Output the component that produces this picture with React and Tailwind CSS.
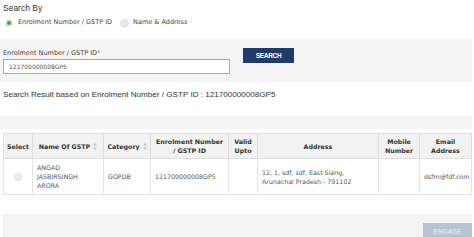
import React from "react";

const SortIcon = () => (
  <svg width="4" height="7" viewBox="0 0 4 7" className="inline-block ml-[3px] align-[-1px]">
    <path d="M2 0 L4 2.5 L0 2.5 Z" fill="#c4c4c4" />
    <path d="M2 7 L4 4.5 L0 4.5 Z" fill="#c4c4c4" />
  </svg>
);

export default function App() {
  const th =
    "border border-[#dedede] bg-[#f2f2f2] font-bold text-[#333] text-center align-middle px-[3px] leading-[9px]";
  const td = "border border-[#e3e3e3] bg-white text-[#555] align-middle px-[4px] leading-[9px]";
  return (
    <div className="w-[474px] h-[237px] overflow-hidden bg-white font-['DejaVu_Sans',Verdana,sans-serif]">
      <div className="pl-[3px] pt-[3px] text-[8.5px] leading-[10px] text-[#333] font-['Liberation_Sans',Arial,sans-serif]">
        Search By
      </div>
      <div className="flex items-center h-[10px] mt-[5px] pl-[5px] text-[6.5px] text-[#444]">
        <span className="w-[8px] h-[8px] rounded-full bg-[#d6ecd6] flex items-center justify-center">
          <span className="w-[4px] h-[4px] rounded-full bg-[#4a9a4a]" />
        </span>
        <span className="ml-[5px]">Enrolment Number / GSTP ID</span>
        <span className="ml-[8px] w-[9px] h-[9px] rounded-full bg-[#e6e6e6]" />
        <span className="ml-[4px]">Name &amp; Address</span>
      </div>
      <div className="mt-[11px] w-[472px] h-[43px] bg-[#f4f4f4] flex pl-[3px]">
        <div className="flex flex-col">
          <div className="mt-[10px] text-[6.5px] leading-[8px] text-[#444]">
            Enrolment Number / GSTP ID<span className="text-[#d9534f]">*</span>
          </div>
          <div className="mt-[2px] w-[227px] h-[15px] bg-white border border-[#a8a8a0] flex items-center pl-[5px] text-[6px] text-[#555]">
            121700000008GP5
          </div>
        </div>
        <div className="ml-[13px] mt-[9px] w-[51px] h-[15px] bg-[#1f3b6a] text-white text-[6.5px] font-bold font-['Liberation_Sans',Arial,sans-serif] flex items-center justify-center tracking-[-0.3px]">
          SEARCH
        </div>
      </div>
      <div className="mt-[8px] pl-[3px] h-[10px] leading-[10px] text-[8.1px] text-[#333] font-['Liberation_Sans',Arial,sans-serif]">
        Search Result based on Enrolment Number / GSTP ID : 121700000008GP5
      </div>
      <div className="mt-[16px] w-[472px] h-[13px] bg-[#f4f4f4]" />
      <div className="mt-[4px] pl-[3px]">
        <table className="table-fixed border-collapse text-[6.3px] w-[468px]">
          <colgroup>
            <col className="w-[29px]" />
            <col className="w-[71px]" />
            <col className="w-[47px]" />
            <col className="w-[78px]" />
            <col className="w-[29px]" />
            <col className="w-[121px]" />
            <col className="w-[41px]" />
            <col className="w-[52px]" />
          </colgroup>
          <thead>
            <tr className="h-[25px]">
              <th className={th}>Select</th>
              <th className={th}>
                Name Of GSTP
                <SortIcon />
              </th>
              <th className={th}>
                Category
                <SortIcon />
              </th>
              <th className={th}>
                Enrolment Number
                <br />/ GSTP ID
              </th>
              <th className={th}>
                Valid
                <br />
                Upto
              </th>
              <th className={th}>Address</th>
              <th className={th}>
                Mobile
                <br />
                Number
              </th>
              <th className={th}>
                Email
                <br />
                Address
              </th>
            </tr>
          </thead>
          <tbody>
            <tr className="h-[36px]">
              <td className={td + " text-center"}>
                <span className="inline-block w-[8px] h-[8px] rounded-full bg-[#ececec] border border-[#dcdcdc] align-middle" />
              </td>
              <td className={td}>
                ANGAD
                <br />
                JASBIRSINGH
                <br />
                ARORA
              </td>
              <td className={td}>GOPDB</td>
              <td className={td}>121700000008GP5</td>
              <td className={td}></td>
              <td className={td}>
                12, 1, sdf, sdf, East Siang,
                <br />
                Arunachal Pradesh - 791102
              </td>
              <td className={td}></td>
              <td className={td + " px-[3px]"}>dsfm@fdf.com</td>
            </tr>
          </tbody>
        </table>
      </div>
      <div className="mt-[19px] ml-[3px] w-[469px] h-[26px] bg-[#f4f4f4] flex justify-end items-start">
        <div className="mt-[9px] w-[49px] h-[17px] bg-[#b8c3d3] text-[#eef1f6] text-[6.5px] font-['Liberation_Sans',Arial,sans-serif] flex items-center justify-center">
          ENGAGE
        </div>
      </div>
    </div>
  );
}
